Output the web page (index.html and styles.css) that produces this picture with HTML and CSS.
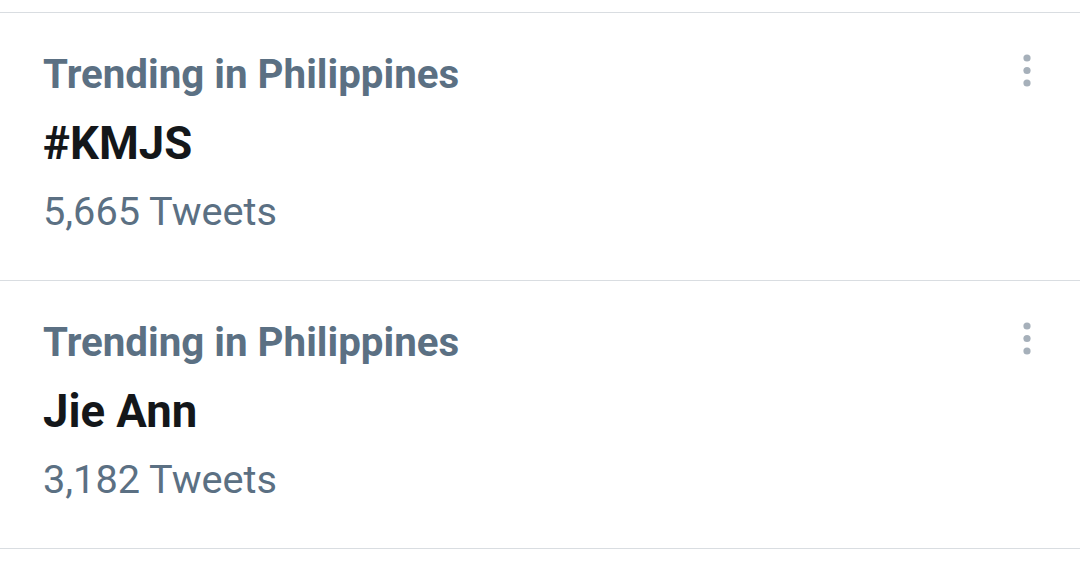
FILE: index.html
```html
<!DOCTYPE html>
<html>
<head>
<meta charset="utf-8">
<link rel="stylesheet" href="styles.css">
</head>
<body>
<div class="list">
  <div class="trend">
    <div class="info">
      <div class="context">Trending in Philippines</div>
      <div class="name">#KMJS</div>
      <div class="count">5,665 Tweets</div>
    </div>
    <div class="menu">
      <svg width="10" height="34" viewBox="0 0 10 34"><circle cx="5" cy="4" r="3.6"/><circle cx="5" cy="16.5" r="3.6"/><circle cx="5" cy="29" r="3.6"/></svg>
    </div>
  </div>
  <div class="trend">
    <div class="info">
      <div class="context">Trending in Philippines</div>
      <div class="name">Jie Ann</div>
      <div class="count">3,182 Tweets</div>
    </div>
    <div class="menu">
      <svg width="10" height="34" viewBox="0 0 10 34"><circle cx="5" cy="4" r="3.6"/><circle cx="5" cy="16.5" r="3.6"/><circle cx="5" cy="29" r="3.6"/></svg>
    </div>
  </div>
</div>
</body>
</html>
```
FILE: styles.css
```css
html, body {
  margin: 0;
  padding: 0;
  background: #ffffff;
}
body {
  font-family: Roboto, "Liberation Sans", sans-serif;
  width: 1080px;
  height: 581px;
  overflow: hidden;
}
.list {
  padding-top: 12px;
}
.trend {
  display: flex;
  justify-content: space-between;
  align-items: flex-start;
  border-top: 1px solid #d9dde1;
  height: 268px;
  padding: 38px 0 0 43px;
  box-sizing: border-box;
}
.trend:last-child {
  border-bottom: 1px solid #d9dde1;
  height: 269px;
}
.info {
  display: flex;
  flex-direction: column;
}
.context {
  font-size: 40.3px;
  line-height: 48px;
  font-weight: 700;
  color: #5b7083;
}
.name {
  font-size: 45.5px;
  line-height: 54px;
  font-weight: 700;
  color: #14171a;
  margin-top: 17.5px;
}
.count {
  font-size: 39.7px;
  line-height: 48px;
  font-weight: 400;
  color: #5b7083;
  margin-top: 17px;
}
.menu {
  margin-right: 48px;
  margin-top: 3px;
  fill: #a6b0ba;
}
.menu svg {
  display: block;
}
```
